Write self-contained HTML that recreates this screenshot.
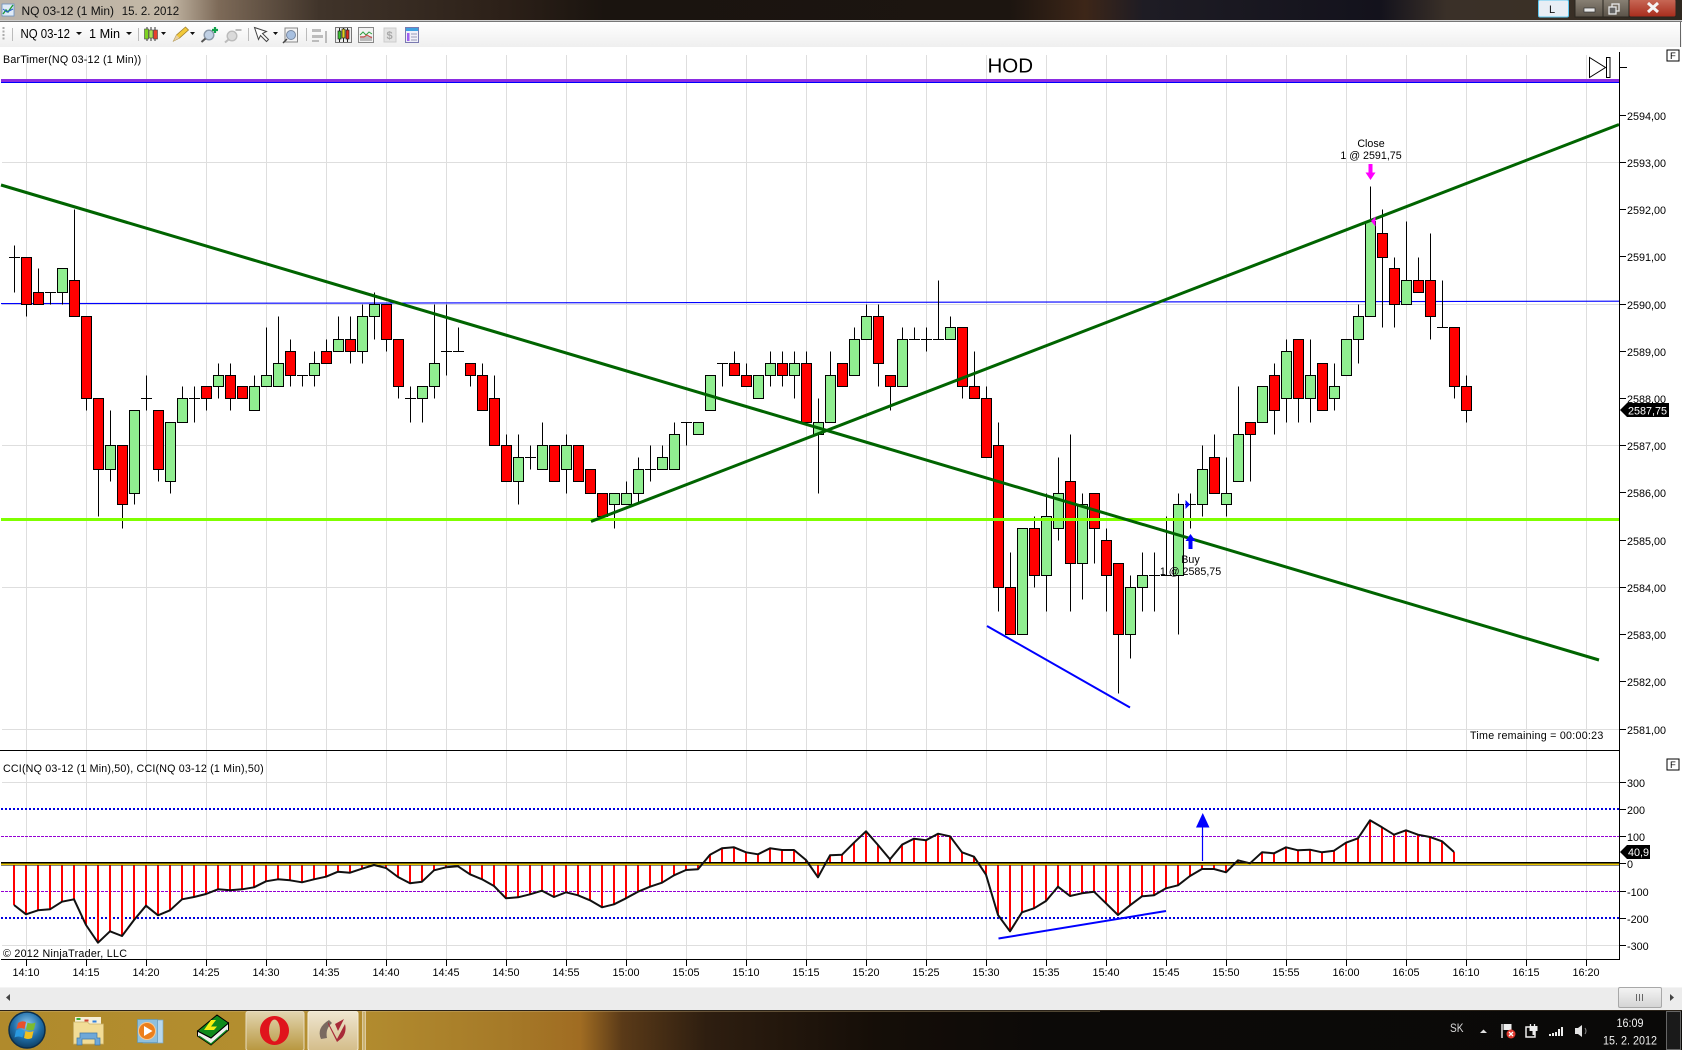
<!DOCTYPE html>
<html><head><meta charset="utf-8"><title>NQ 03-12 (1 Min) 15. 2. 2012</title>
<style>html,body{margin:0;padding:0;background:#fff;width:1682px;height:1050px;overflow:hidden}svg{display:block}text{font-family:"Liberation Sans",Arial,sans-serif}</style></head><body>
<svg xmlns="http://www.w3.org/2000/svg" width="1682" height="1050" viewBox="0 0 1682 1050">
<defs>
<linearGradient id="tb" x1="0" x2="1" y1="0" y2="0">
<stop offset="0" stop-color="#b9b2a8"/><stop offset=".1" stop-color="#c4b8a6"/><stop offset=".13" stop-color="#7d6a58"/><stop offset=".19" stop-color="#40342a"/><stop offset=".3" stop-color="#2c2018"/><stop offset=".36" stop-color="#1a140f"/><stop offset=".6" stop-color="#1c1510"/><stop offset=".645" stop-color="#3d2618"/><stop offset=".68" stop-color="#1e1c24"/><stop offset=".82" stop-color="#13121c"/><stop offset=".86" stop-color="#3a3028"/><stop offset=".92" stop-color="#3a3026"/><stop offset="1" stop-color="#2e2820"/>
</linearGradient>
<linearGradient id="tool" x1="0" x2="0" y1="0" y2="1"><stop offset="0" stop-color="#fff"/><stop offset="1" stop-color="#efefef"/></linearGradient>
<linearGradient id="task" x1="0" x2="1" y1="0" y2="0">
<stop offset="0" stop-color="#b08a2c"/><stop offset=".2" stop-color="#b48f30"/><stop offset=".3" stop-color="#a67a28"/><stop offset=".345" stop-color="#a06c22"/><stop offset=".37" stop-color="#5a3a18"/><stop offset=".42" stop-color="#2e1e10"/><stop offset=".52" stop-color="#150e08"/><stop offset=".62" stop-color="#0c0a08"/><stop offset="1" stop-color="#0a0908"/>
</linearGradient>
<linearGradient id="btn" x1="0" x2="0" y1="0" y2="1"><stop offset="0" stop-color="#e2d5b0"/><stop offset="1" stop-color="#b8973f"/></linearGradient>
<linearGradient id="btn2" x1="0" x2="0" y1="0" y2="1"><stop offset="0" stop-color="#efe6d0"/><stop offset="1" stop-color="#d4bd8a"/></linearGradient>
<linearGradient id="cl" x1="0" x2="0" y1="0" y2="1"><stop offset="0" stop-color="#c86a58"/><stop offset="1" stop-color="#a82c1c"/></linearGradient>
<linearGradient id="mn" x1="0" x2="0" y1="0" y2="1"><stop offset="0" stop-color="#8a8276"/><stop offset="1" stop-color="#5a5248"/></linearGradient>
<linearGradient id="th" x1="0" x2="0" y1="0" y2="1"><stop offset="0" stop-color="#f4f4f4"/><stop offset="1" stop-color="#d4d4d4"/></linearGradient>
<radialGradient id="orb" cx=".5" cy=".35" r=".7"><stop offset="0" stop-color="#8cc8ee"/><stop offset=".55" stop-color="#1f6ea8"/><stop offset="1" stop-color="#0a3556"/></radialGradient>
</defs>

<!-- title bar -->
<rect width="1682" height="20" fill="url(#tb)"/>
<rect y="20" width="1682" height="1" fill="#cfcfcf"/><rect y="21" width="1682" height="1" fill="#777"/>
<rect x="2" y="4" width="12" height="12" fill="#dfeaf6" stroke="#6a8fc0" stroke-width=".8"/>
<path d="M3 14l3-4 2 2 5-7" fill="none" stroke="#1f9a3a" stroke-width="1.4"/><path d="M3 9l4 3 6-3" fill="none" stroke="#2a5fd0" stroke-width="1"/>
<text x="21.5" y="15" font-size="12.400" fill="#111" textLength="92.500" lengthAdjust="spacingAndGlyphs">NQ 03-12 (1 Min)</text>
<text x="121.700" y="15" font-size="12.400" fill="#111" textLength="57.500" lengthAdjust="spacingAndGlyphs">15. 2. 2012</text>
<rect x="1538.5" y="0" width="30" height="17" rx="1.5" fill="#e8eef5" stroke="#5ec8f0"/>
<text x="1549" y="13" font-size="11" fill="#111">L</text>
<rect x="1575" y="-1" width="28" height="18" fill="url(#mn)" stroke="#2a2620"/><rect x="1603" y="-1" width="26" height="18" fill="url(#mn)" stroke="#2a2620"/><rect x="1629" y="-1" width="47" height="18" rx="2" fill="url(#cl)" stroke="#2a2620"/>
<rect x="1584" y="8" width="11" height="4" fill="#e8e8e8" stroke="#333" stroke-width=".7"/>
<rect x="1612" y="4" width="7" height="7" fill="none" stroke="#e8e8e8" stroke-width="1.3"/><rect x="1609" y="7" width="7" height="7" fill="#666" stroke="#e8e8e8" stroke-width="1.3"/>
<path d="M1648 3l10 9M1658 3l-10 9" stroke="#f4f4f4" stroke-width="3"/>

<!-- toolbar -->
<rect y="22" width="1682" height="25" fill="url(#tool)"/>
<rect x="1680" y="22" width="1" height="25" fill="#666"/>
<path d="M3.5 27v14" stroke="#aaa" stroke-width="2" stroke-dasharray="2 1.5"/>
<path d="M12.500 28v13M138.500 28v13M248.500 28v13M306.500 28v13" stroke="#bbb"/>
<text x="20.500" y="38" font-size="12.600" fill="#000" textLength="49.500" lengthAdjust="spacingAndGlyphs">NQ 03-12</text><text x="89" y="38" font-size="12.600" fill="#000" textLength="31" lengthAdjust="spacingAndGlyphs">1 Min</text>
<path d="M76 32h6l-3 3zM126 32h6l-3 3zM161 32h5l-2.500 3zM190 32h5l-2.500 3zM273 32h5l-2.500 3z" fill="#111"/>
<!-- candle icon -->
<path d="M147 27v14M151 27v14M155 27v14" stroke="#333"/><rect x="144.500" y="29" width="4" height="10" fill="#7ed321" stroke="#444" stroke-width=".6"/><rect x="149" y="30" width="4" height="8" fill="#a8e050" stroke="#444" stroke-width=".6"/><rect x="153.500" y="30" width="4" height="9" fill="#e8402c" stroke="#444" stroke-width=".6"/>
<!-- pencil -->
<path d="M173.500 41l3-6 9-8 3 3-9 8z" fill="#f2c93a" stroke="#a08030" stroke-width=".8"/><path d="M173.500 41l3-6 3 3z" fill="#e8d0a0"/>
<!-- magnifier plus -->
<circle cx="209" cy="35" r="4.800" fill="#c0d0e4" stroke="#8a98a8" stroke-width="1.400"/><path d="M205.500 38.500l-4 3.500" stroke="#555" stroke-width="2"/><path d="M212 30h6M215 27v6" stroke="#11a04a" stroke-width="2.200"/>
<!-- magnifier minus -->
<circle cx="232" cy="36" r="4.800" fill="#dadada" stroke="#bbb" stroke-width="1.400"/><path d="M228.500 39.500l-3.500 3" stroke="#bbb" stroke-width="2"/><path d="M235.500 30h6" stroke="#bbb" stroke-width="2"/>
<!-- cursor -->
<path d="M254.500 27.500l4 12 2-4 6 6 2-2-6-6 4-2z" fill="#fff" stroke="#444" stroke-width="1"/>
<!-- zoom page -->
<rect x="285" y="28" width="12.500" height="14" fill="#f4f4f4" stroke="#888"/><circle cx="291" cy="35" r="4.500" fill="#a8c0e0" stroke="#7888a0"/><path d="M287 39l-4 4" stroke="#444" stroke-width="1.500"/>
<!-- grey tool -->
<path d="M312 29h9v3h-9zM312 35h11v3h-11zM312 40h7v2h-7zM325 31h2v12h-2z" fill="#bcbcbc"/>
<!-- candle box -->
<rect x="335.500" y="27.500" width="16" height="15" fill="#eee" stroke="#777"/><path d="M339.500 28v14M343.500 28v14M347.500 28v14" stroke="#222"/><rect x="338" y="31" width="3" height="8" fill="#38c030" stroke="#222" stroke-width=".7"/><rect x="342" y="29" width="3" height="9" fill="#e0d020" stroke="#222" stroke-width=".7"/><rect x="346" y="30" width="3" height="9" fill="#e02c20" stroke="#222" stroke-width=".7"/>
<!-- chart box -->
<rect x="358.500" y="27.500" width="15" height="15" fill="#f2f2f2" stroke="#888"/><path d="M360 36h12v5h-12z" fill="#bbb"/><path d="M360 35l3-3 3 3 3-3 3 2" fill="none" stroke="#30a040"/><path d="M360 37l4 0 3-2 5 3" fill="none" stroke="#d04040"/>
<!-- dollar -->
<rect x="384" y="28" width="12" height="14" fill="#e4e4e4" stroke="#ccc"/><text x="386.500" y="39" font-size="11" font-weight="bold" fill="#a8a8a8">$</text>
<!-- blue doc -->
<rect x="405.500" y="27.500" width="13" height="15" fill="#f0f0f8" stroke="#7a7ab0"/><rect x="406" y="28" width="12" height="3" fill="#3fa0e0"/><rect x="407" y="33" width="2.500" height="8" fill="#a060f0"/><path d="M411 34h6M411 37h6M411 40h6" stroke="#9a9ab8"/>

<!-- grid -->
<path d="M26.500 55V959M86.500 55V959M146.500 55V959M206.500 55V959M266.500 55V959M326.500 55V959M386.500 55V959M446.500 55V959M506.500 55V959M566.500 55V959M626.500 55V959M686.500 55V959M746.500 55V959M806.500 55V959M866.500 55V959M926.500 55V959M986.500 55V959M1046.500 55V959M1106.500 55V959M1166.500 55V959M1226.500 55V959M1286.500 55V959M1346.500 55V959M1406.500 55V959M1466.500 55V959M1526.500 55V959M1586.500 55V959" stroke="#dedede" fill="none"/>
<path d="M2 162.500H1619M2 304.500H1619M2 445.500H1619M2 587.500H1619M2 729.500H1619M2 782.500H1619M2 945.500H1619" stroke="#dedede" fill="none"/>

<!-- horizontal levels -->
<rect x="1" y="79" width="1618" height="3" fill="#8a2be2"/><rect x="1" y="82" width="1618" height="1" fill="#0000ff"/>
<line x1="1" y1="303.600" x2="1619" y2="301.200" stroke="#0000ff" stroke-width="1.100"/>

<!-- wicks -->
<path stroke="#000" fill="none" d="M14.500 245.500V292.500M26.500 257.500V316.500M38.500 268.500V304.500M50.500 292.500V304.500M62.500 292.500V304.500M74.500 209.500V316.500M86.500 398.500V410.500M98.500 469.500V516.500M110.500 410.500V481.500M122.500 504.500V528.500M134.500 493.500V504.500M146.500 375.500V410.500M158.500 469.500V481.500M170.500 481.500V493.500M182.500 386.500V398.500M194.500 386.500V422.500M206.500 398.500V410.500M218.500 363.500V398.500M230.500 363.500V410.500M254.500 375.500V386.500M266.500 327.500V375.500M278.500 316.500V363.500M290.500 339.500V386.500M302.500 375.500V386.500M314.500 351.500V386.500M326.500 339.500V351.500M338.500 316.500V339.500M350.500 316.500V363.500M362.500 304.500V363.500M374.500 292.500V339.500M386.500 339.500V351.500M398.500 386.500V398.500M410.500 386.500V422.500M422.500 398.500V422.500M434.500 304.500V398.500M446.500 304.500V375.500M458.500 327.500V351.500M470.500 375.500V386.500M482.500 363.500V375.500M494.500 375.500V398.500M506.500 434.500V445.500M518.500 434.500V504.500M530.500 445.500V469.500M542.500 422.500V445.500M566.500 434.500V493.500M614.500 504.500V528.500M626.500 481.500V493.500M638.500 457.500V504.500M650.500 445.500V481.500M662.500 445.500V457.500M674.500 422.500V434.500M686.500 422.500V445.500M722.500 363.500V386.500M734.500 351.500V363.500M746.500 363.500V375.500M770.500 351.500V386.500M782.500 351.500V386.500M794.500 351.500V398.500M806.500 351.500V363.500M818.500 398.500V493.500M830.500 351.500V375.500M854.500 327.500V339.500M866.500 304.500V316.500M878.500 304.500V386.500M890.500 386.500V410.500M902.500 327.500V339.500M914.500 327.500V339.500M926.500 327.500V351.500M938.500 280.500V339.500M950.500 316.500V327.500M962.500 386.500V398.500M974.500 351.500V386.500M986.500 386.500V398.500M998.500 422.500V611.500M1010.500 552.500V587.500M1034.500 516.500V587.500M1046.500 493.500V611.500M1058.500 457.500V540.500M1070.500 434.500V611.500M1082.500 493.500V599.500M1094.500 528.500V563.500M1106.500 528.500V611.500M1118.500 634.500V693.500M1130.500 575.500V658.500M1142.500 552.500V611.500M1154.500 552.500V611.500M1166.500 516.500V575.500M1178.500 493.500V634.500M1190.500 493.500V528.500M1202.500 445.500V516.500M1214.500 434.500V457.500M1226.500 457.500V516.500M1238.500 386.500V434.500M1250.500 434.500V481.500M1274.500 363.500V434.500M1286.500 339.500V422.500M1298.500 398.500V422.500M1310.500 339.500V422.500M1334.500 363.500V410.500M1358.500 304.500V363.500M1370.500 186.500V221.500M1382.500 209.500V327.500M1394.500 257.500V327.500M1406.500 221.500V280.500M1418.500 257.500V280.500M1430.500 233.500V339.500M1442.500 280.500V327.500M1454.500 386.500V398.500M1466.500 375.500V422.500"/>
<!-- dojis -->
<path stroke="#000" fill="none" d="M9 257.500h11M45 292.500h11M141 398.500h11M189 398.500h11M297 375.500h11M405 398.500h11M441 351.500h11M453 351.500h11M525 457.500h11M645 469.500h11M681 422.500h11M717 363.500h11M909 339.500h11M921 339.500h11M933 339.500h11M1149 575.500h11M1161 575.500h11M1185 504.500h11M1437 327.500h11"/>
<!-- red bodies -->
<path fill="#f00" stroke="#000" d="M21.500 257.500h10V304.500h-10zM33.500 292.500h10V304.500h-10zM69.500 280.500h10V316.500h-10zM81.500 316.500h10V398.500h-10zM93.500 398.500h10V469.500h-10zM117.500 445.500h10V504.500h-10zM153.500 410.500h10V469.500h-10zM201.500 386.500h10V398.500h-10zM225.500 375.500h10V398.500h-10zM237.500 386.500h10V398.500h-10zM285.500 351.500h10V375.500h-10zM321.500 351.500h10V363.500h-10zM345.500 339.500h10V351.500h-10zM381.500 304.500h10V339.500h-10zM393.500 339.500h10V386.500h-10zM465.500 363.500h10V375.500h-10zM477.500 375.500h10V410.500h-10zM489.500 398.500h10V445.500h-10zM501.500 445.500h10V481.500h-10zM549.500 445.500h10V481.500h-10zM573.500 445.500h10V481.500h-10zM585.500 469.500h10V493.500h-10zM597.500 493.500h10V516.500h-10zM729.500 363.500h10V375.500h-10zM741.500 375.500h10V386.500h-10zM777.500 363.500h10V375.500h-10zM801.500 363.500h10V422.500h-10zM837.500 363.500h10V386.500h-10zM873.500 316.500h10V363.500h-10zM885.500 375.500h10V386.500h-10zM957.500 327.500h10V386.500h-10zM969.500 386.500h10V398.500h-10zM981.500 398.500h10V457.500h-10zM993.500 445.500h10V587.500h-10zM1005.500 587.500h10V634.500h-10zM1029.500 528.500h10V575.500h-10zM1065.500 481.500h10V563.500h-10zM1089.500 493.500h10V528.500h-10zM1101.500 540.500h10V575.500h-10zM1113.500 563.500h10V634.500h-10zM1209.500 457.500h10V493.500h-10zM1245.500 422.500h10V434.500h-10zM1269.500 375.500h10V410.500h-10zM1293.500 339.500h10V398.500h-10zM1317.500 363.500h10V410.500h-10zM1377.500 233.500h10V257.500h-10zM1389.500 268.500h10V304.500h-10zM1413.500 280.500h10V292.500h-10zM1425.500 280.500h10V316.500h-10zM1449.500 327.500h10V386.500h-10zM1461.500 386.500h10V410.500h-10z"/>
<!-- green bodies -->
<path fill="#90ee90" stroke="#000" d="M57.500 268.500h10V292.500h-10zM105.500 445.500h10V469.500h-10zM129.500 410.500h10V493.500h-10zM165.500 422.500h10V481.500h-10zM177.500 398.500h10V422.500h-10zM213.500 375.500h10V386.500h-10zM249.500 386.500h10V410.500h-10zM261.500 375.500h10V386.500h-10zM273.500 363.500h10V386.500h-10zM309.500 363.500h10V375.500h-10zM333.500 339.500h10V351.500h-10zM357.500 316.500h10V351.500h-10zM369.500 304.500h10V316.500h-10zM417.500 386.500h10V398.500h-10zM429.500 363.500h10V386.500h-10zM513.500 457.500h10V481.500h-10zM537.500 445.500h10V469.500h-10zM561.500 445.500h10V469.500h-10zM609.500 493.500h10V504.500h-10zM621.500 493.500h10V504.500h-10zM633.500 469.500h10V493.500h-10zM657.500 457.500h10V469.500h-10zM669.500 434.500h10V469.500h-10zM693.500 422.500h10V434.500h-10zM705.500 375.500h10V410.500h-10zM753.500 375.500h10V398.500h-10zM765.500 363.500h10V375.500h-10zM789.500 363.500h10V375.500h-10zM813.500 422.500h10V434.500h-10zM825.500 375.500h10V422.500h-10zM849.500 339.500h10V375.500h-10zM861.500 316.500h10V339.500h-10zM897.500 339.500h10V386.500h-10zM945.500 327.500h10V339.500h-10zM1017.500 528.500h10V634.500h-10zM1041.500 516.500h10V575.500h-10zM1053.500 493.500h10V528.500h-10zM1077.500 504.500h10V563.500h-10zM1125.500 587.500h10V634.500h-10zM1137.500 575.500h10V587.500h-10zM1173.500 504.500h10V575.500h-10zM1197.500 469.500h10V504.500h-10zM1221.500 493.500h10V504.500h-10zM1233.500 434.500h10V481.500h-10zM1257.500 386.500h10V422.500h-10zM1281.500 351.500h10V398.500h-10zM1305.500 375.500h10V398.500h-10zM1329.500 386.500h10V398.500h-10zM1341.500 339.500h10V375.500h-10zM1353.500 316.500h10V339.500h-10zM1365.500 221.500h10V316.500h-10zM1401.500 280.500h10V304.500h-10z"/>

<!-- level + trend lines -->
<rect x="1" y="518" width="1618" height="3" fill="#7fff00"/>
<line x1="1" y1="185" x2="1599" y2="660" stroke="#006400" stroke-width="3"/>
<line x1="591" y1="521.500" x2="1619" y2="124.500" stroke="#006400" stroke-width="3"/>
<line x1="987" y1="626" x2="1130" y2="707.500" stroke="#0000ff" stroke-width="2"/>

<!-- order markers -->
<rect x="1368.500" y="164" width="4" height="10" fill="#f0f"/><path d="M1365.500 172.500h10l-5 7.500z" fill="#f0f"/>
<path d="M1371 221l4.500-4.500v10z" fill="#f0f"/>
<rect x="1188.500" y="539" width="4" height="10" fill="#00f"/><path d="M1185.500 541h10l-5-7z" fill="#00f"/>
<path d="M1190 504.500l-4.500-4.500v9z" fill="#00f"/>
<text x="1371" y="147" font-size="10.700" text-anchor="middle" fill="#000">Close</text>
<text x="1371" y="159" font-size="10.700" text-anchor="middle" fill="#000">1 @ 2591,75</text>
<text x="1190.500" y="563" font-size="10.700" text-anchor="middle" fill="#000">Buy</text>
<text x="1190.500" y="575" font-size="10.700" text-anchor="middle" fill="#000">1 @ 2585,75</text>

<!-- labels -->
<text x="3" y="63" font-size="10.700" fill="#000" letter-spacing=".2">BarTimer(NQ 03-12 (1 Min))</text>
<text x="987.500" y="72.500" font-size="20.500" fill="#000">HOD</text>
<path d="M1589.500 57.500v20l16-10z" fill="#fff" stroke="#000"/><rect x="1606.500" y="57.500" width="3.500" height="20" fill="#fff" stroke="#000"/>
<text x="1470" y="739" font-size="10.700" fill="#000" letter-spacing=".26">Time remaining = 00:00:23</text>
<rect x="1667" y="50" width="12" height="11" fill="#fff" stroke="#000"/><text x="1670" y="59" font-size="9.500" fill="#000">F</text>
<rect x="1667" y="759" width="12" height="11" fill="#fff" stroke="#000"/><text x="1670" y="768" font-size="9.500" fill="#000">F</text>

<!-- axis -->
<path d="M1619.500 52V959M1619 67.500h8M1619 115.500h7M1619 162.500h7M1619 209.500h7M1619 256.500h7M1619 304.500h7M1619 351.500h7M1619 398.500h7M1619 445.500h7M1619 492.500h7M1619 540.500h7M1619 587.500h7M1619 634.500h7M1619 681.500h7M1619 729.500h7M1619 782.500h7M1619 809.500h7M1619 836.500h7M1619 863.500h7M1619 891.500h7M1619 918.500h7M1619 945.500h7" stroke="#000" fill="none"/>
<g font-size="10.800" fill="#000">
<text x="1627" y="120">2594,00</text><text x="1627" y="167">2593,00</text><text x="1627" y="214">2592,00</text><text x="1627" y="261">2591,00</text><text x="1627" y="309">2590,00</text><text x="1627" y="356">2589,00</text><text x="1627" y="403">2588,00</text><text x="1627" y="450">2587,00</text><text x="1627" y="497">2586,00</text><text x="1627" y="545">2585,00</text><text x="1627" y="592">2584,00</text><text x="1627" y="639">2583,00</text><text x="1627" y="686">2582,00</text><text x="1627" y="734">2581,00</text>
<text x="1627" y="787">300</text><text x="1627" y="814">200</text><text x="1627" y="841">100</text><text x="1627" y="868">0</text><text x="1627" y="896">-100</text><text x="1627" y="923">-200</text><text x="1627" y="950">-300</text>
</g>
<path d="M1620 410l7-7h42v14h-42z" fill="#000"/><text x="1628" y="414.500" font-size="10.800" fill="#fff">2587,75</text>
<path d="M1620 852l7-7h23v14h-23z" fill="#000"/><text x="1628" y="856" font-size="10.800" fill="#fff">40,9</text>

<!-- panel divider -->
<rect x="0" y="750" width="1620" height="1" fill="#000"/>
<text x="3" y="772" font-size="10.700" fill="#000" letter-spacing=".18">CCI(NQ 03-12 (1 Min),50), CCI(NQ 03-12 (1 Min),50)</text>

<!-- CCI -->
<line x1="1" y1="809" x2="1619" y2="809" stroke="#0000e0" stroke-width="2" stroke-dasharray="2 2"/>
<line x1="1" y1="918" x2="1619" y2="918" stroke="#0000e0" stroke-width="2" stroke-dasharray="2 2"/>
<line x1="1" y1="836.500" x2="1619" y2="836.500" stroke="#9400d3" stroke-dasharray="3 1"/>
<line x1="1" y1="891.500" x2="1619" y2="891.500" stroke="#9400d3" stroke-dasharray="3 1"/>
<path stroke="#f00" stroke-width="2" fill="none" d="M14 864V905M26 864V914M38 864V910M50 864V909M62 864V902M74 864V899M86 864V925M98 864V943M110 864V931M122 864V936M134 864V920M146 864V906M158 864V915M170 864V910M182 864V899M194 864V897M206 864V894M218 864V889M230 864V890M242 864V889M254 864V887M266 864V881M278 864V879M290 864V880M302 864V882M314 864V879M326 864V877M338 864V872M350 864V873M362 864V869M374 864V865M386 864V868M398 864V877M410 864V883M422 864V882M434 864V870M446 864V867M458 864V866M470 864V874M482 864V879M494 864V886M506 864V898M518 864V897M530 864V894M542 864V891M554 864V897M566 864V892M578 864V895M590 864V900M602 864V907M614 864V904M626 864V898M638 864V892M650 864V887M662 864V883M674 864V875M686 864V870M698 864V869M710 864V855M722 864V848M734 864V847M746 864V852M758 864V854M770 864V848M782 864V850M794 864V850M806 864V860M818 864V877M830 864V855M842 864V855M854 864V843M866 864V831M878 864V845M890 864V859M902 864V845M914 864V839M926 864V840M938 864V834M950 864V836M962 864V852M974 864V857M986 864V875M998 864V915M1010 864V931M1022 864V912M1034 864V908M1046 864V901M1058 864V887M1070 864V896M1082 864V893M1094 864V892M1106 864V903M1118 864V915M1130 864V905M1142 864V896M1154 864V895M1166 864V888M1178 864V885M1190 864V876M1202 864V869M1214 864V869M1226 864V872M1238 864V860M1250 864V863M1262 864V852M1274 864V853M1286 864V847M1298 864V850M1310 864V850M1322 864V852M1334 864V851M1346 864V843M1358 864V838M1370 864V820M1382 864V827M1394 864V835M1406 864V830M1418 864V835M1430 864V837M1442 864V841M1454 864V852"/>
<rect x="1" y="862" width="1618" height="1.500" fill="#000"/><rect x="1" y="863.500" width="1618" height="1.500" fill="#e8c400"/><rect x="1" y="865" width="1618" height=".6" fill="#333"/>
<polyline fill="none" stroke="#111" stroke-width="2" stroke-linejoin="round" points="14,905 26,914.300 38,910.300 50,909.300 62,901.700 74,899.300 86,925 98,942.700 110,931.300 122,936 134,920 146,905.700 158,915.300 170,910.300 182,899.300 194,897 206,894 218,889.300 230,890.300 242,889.300 254,887.300 266,881.300 278,879.300 290,880.300 302,882.300 314,879.300 326,876.700 338,871.700 350,872.700 362,868.700 374,865 386,868 398,877 410,883.300 422,881.700 434,870.300 446,867.300 458,866.300 470,874.300 482,879.300 494,886 506,898.300 518,897.300 530,894.300 542,890.700 554,897 566,892.300 578,895.300 590,900.300 602,907.300 614,904.300 626,898.300 638,891.700 650,886.700 662,882.700 674,875.300 686,870 698,869.300 710,854.700 722,848.300 734,847.300 746,852.300 758,854.300 770,848.300 782,850 794,850 806,860 818,877.300 830,855.300 842,854.700 854,842.700 866,831.300 878,845 890,859.300 902,844.700 914,838.700 926,840.300 938,833.700 950,836.300 962,852.300 974,856.700 986,874.700 998,915 1010,931.300 1022,912.300 1034,908.300 1046,901 1058,886.700 1070,896 1082,893.300 1094,891.700 1106,903.300 1118,915 1130,905.300 1142,896.300 1154,895.300 1166,888.300 1178,885.300 1190,876 1202,869 1214,869 1226,872.300 1238,860.300 1250,863.300 1262,852.300 1274,853.300 1286,847.300 1298,850.300 1310,849.700 1322,852.300 1334,850.700 1346,842.700 1358,838.300 1370,820.300 1382,827.300 1394,834.700 1406,830.300 1418,834.700 1430,837 1442,841.300 1454,852"/>
<line x1="998.500" y1="938.500" x2="1166" y2="911" stroke="#0000ff" stroke-width="2"/>
<line x1="1202.500" y1="827" x2="1202.500" y2="861" stroke="#00f" stroke-width="1.200"/><path d="M1196 827.500h13.500l-6.750-14.500z" fill="#00f"/>
<text x="3" y="957" font-size="10.700" fill="#000" letter-spacing=".27">© 2012 NinjaTrader, LLC</text>

<!-- time axis -->
<rect x="1" y="959" width="1619" height="1" fill="#000"/>
<path d="M26.500 960V966M86.500 960V966M146.500 960V966M206.500 960V966M266.500 960V966M326.500 960V966M386.500 960V966M446.500 960V966M506.500 960V966M566.500 960V966M626.500 960V966M686.500 960V966M746.500 960V966M806.500 960V966M866.500 960V966M926.500 960V966M986.500 960V966M1046.500 960V966M1106.500 960V966M1166.500 960V966M1226.500 960V966M1286.500 960V966M1346.500 960V966M1406.500 960V966M1466.500 960V966M1526.500 960V966M1586.500 960V966" stroke="#000"/>
<g font-size="10.800" fill="#000" text-anchor="middle">
<text x="26" y="976">14:10</text><text x="86" y="976">14:15</text><text x="146" y="976">14:20</text><text x="206" y="976">14:25</text><text x="266" y="976">14:30</text><text x="326" y="976">14:35</text><text x="386" y="976">14:40</text><text x="446" y="976">14:45</text><text x="506" y="976">14:50</text><text x="566" y="976">14:55</text><text x="626" y="976">15:00</text><text x="686" y="976">15:05</text><text x="746" y="976">15:10</text><text x="806" y="976">15:15</text><text x="866" y="976">15:20</text><text x="926" y="976">15:25</text><text x="986" y="976">15:30</text><text x="1046" y="976">15:35</text><text x="1106" y="976">15:40</text><text x="1166" y="976">15:45</text><text x="1226" y="976">15:50</text><text x="1286" y="976">15:55</text><text x="1346" y="976">16:00</text><text x="1406" y="976">16:05</text><text x="1466" y="976">16:10</text><text x="1526" y="976">16:15</text><text x="1586" y="976">16:20</text>
</g>

<!-- scrollbar -->
<rect y="987" width="1682" height="23" fill="#ececec"/><rect y="987" width="1682" height="1" fill="#f4f4f4"/>
<path d="M10 994v7l-4-3.500z" fill="#444"/><path d="M1670 994v7l4-3.500z" fill="#444"/>
<rect x="1618.500" y="987.500" width="43" height="20" rx="1.500" fill="url(#th)" stroke="#a8a8a8"/>
<path d="M1636.500 994v7M1639.500 994v7M1642.500 994v7" stroke="#666"/>

<!-- taskbar -->
<rect y="1010" width="1682" height="40" fill="url(#task)"/>
<rect y="1010" width="1682" height="1" fill="#2a2218"/>
<rect y="1011" width="1100" height="1" fill="#d0b880" opacity=".35"/>
<circle cx="27" cy="1030" r="18" fill="url(#orb)" stroke="#0c2f4c" stroke-width="1.500"/>
<path d="M18 1023q4-3 8-1l-1.500 7q-4-2-8 0z" fill="#e8502c"/><path d="M27.500 1022.500q4 2 8 0l-1.500 7q-4 2-8 0z" fill="#7cbb30"/><path d="M16 1030.500q4-2 8 0l-1.500 7q-4-2-8 0z" fill="#2a9ae0"/><path d="M25.500 1031q4 2 8 0l-1.500 7q-4 2-8 0z" fill="#f0c020"/>
<!-- folder -->
<rect x="75" y="1017" width="26" height="7" fill="#f6f0d8"/><rect x="76.500" y="1018" width="4" height="2" fill="#34b034"/><rect x="84.500" y="1019.500" width="4" height="2" fill="#d04030"/><rect x="92.500" y="1020.500" width="4" height="2" fill="#3080e0"/>
<path d="M73.500 1022h14l2 2h14v20h-30z" fill="#f2dc96" stroke="#c9b06a" stroke-width=".7"/>
<path d="M77 1045v-7h3v-5h17v5h3v7h-5v-6h-13v6z" fill="#6ea8d8" stroke="#3f78a8" stroke-width=".7"/>
<!-- media player -->
<rect x="143" y="1020" width="20" height="23" fill="#b8d8ee" stroke="#78a8c8" stroke-width=".7"/><rect x="137.500" y="1019.500" width="20" height="23" fill="#8fc0de" stroke="#5f98b8" stroke-width=".7"/>
<circle cx="147" cy="1031" r="8.500" fill="#ec7f1c" stroke="#f8c890"/><path d="M144 1026l8.500 5-8.500 5z" fill="#fff"/>
<!-- book -->
<path d="M197.500 1031v5l13.500 9 17.500-15v-7l-17.500 15z" fill="#f0f0f0" stroke="#000"/>
<path d="M197.500 1031l19.500-16 11.500 8-17.500 15z" fill="#0f8a1c" stroke="#000"/>
<path d="M211 1020h5l-5 6.500h6l-3 3.500h-10z" fill="#f4ee10"/>
<path d="M199 1036l12 8 16-14" stroke="#0f8a1c" fill="none" stroke-width="1.200"/>
<!-- opera button -->
<rect x="246" y="1011.500" width="58" height="39" rx="2" fill="url(#btn)" stroke="#e8dcc0"/>
<path fill-rule="evenodd" d="M274.500 1016a14.500 14.500 0 1 0 .01 0zM274.500 1019.500a5.500 11 0 1 1-.01 0z" fill="#e0141c"/>
<!-- ninja button -->
<rect x="308" y="1011.500" width="50" height="39" rx="2" fill="url(#btn2)" stroke="#f4ecd8"/>
<rect x="362.500" y="1011.500" width="3" height="39" fill="#cbb270" stroke="#e8dcc0" stroke-width=".7"/>
<path d="M321 1039q-5-11 8-19l3 3q-7 6-5 15z" fill="#7a6a60"/><path d="M328 1022l9 17 8-15q2 8-3 14l-5 4-9-18z" fill="#a82a38"/><path d="M344 1019l-6 12-3-7z" fill="#a82a38"/>
<!-- tray -->
<text x="1450" y="1032" font-size="11.500" fill="#d8d8d8" textLength="13.500" lengthAdjust="spacingAndGlyphs">SK</text>
<path d="M1480 1033l3.500-3.500 3.500 3.500z" fill="#e0e0e0"/>
<path d="M1502 1024v14" stroke="#f0f0f0" stroke-width="1.400"/><path d="M1503.500 1024h8v6h-8z" fill="#eee"/><circle cx="1511" cy="1034" r="4.500" fill="#e03a30"/><path d="M1509 1032l4 4M1513 1032l-4 4" stroke="#fff" stroke-width="1.300"/>
<rect x="1526" y="1027" width="9" height="10" fill="none" stroke="#eee" stroke-width="1.500"/><path d="M1530.500 1024v3M1534.500 1024v3" stroke="#eee" stroke-width="1.300"/><rect x="1529.500" y="1026" width="8" height="5" fill="#eee"/><path d="M1533.500 1031v4" stroke="#eee" stroke-width="2"/>
<path d="M1549 1034h2v2h-2zM1552 1033h2v3h-2zM1555 1032h2v4h-2zM1558 1029h2v7h-2zM1561 1027h2v9h-2z" fill="#eee"/>
<path d="M1575 1028h3l4-3v12l-4-3h-3z" fill="#e4e4e4"/><path d="M1585 1028q2 3 0 6" fill="none" stroke="#888"/>
<text x="1630" y="1027" font-size="12" fill="#f0f0f0" text-anchor="middle" textLength="27" lengthAdjust="spacingAndGlyphs">16:09</text>
<text x="1630" y="1044.500" font-size="12" fill="#f0f0f0" text-anchor="middle" textLength="54" lengthAdjust="spacingAndGlyphs">15. 2. 2012</text>
<rect x="1666.500" y="1011.500" width="14" height="38" fill="#1a1a1a" stroke="#666"/>
</svg>
</body></html>
